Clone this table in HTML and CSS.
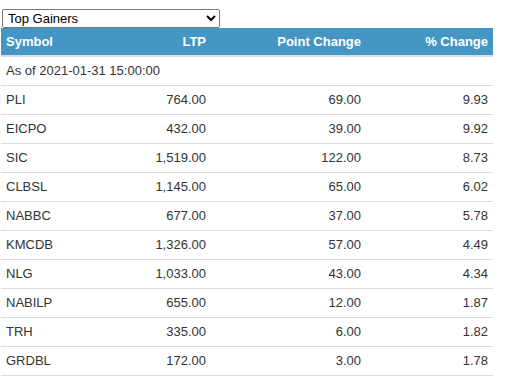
FILE: index.html
```html
<!DOCTYPE html>
<html>
<head>
<meta charset="utf-8">
<link rel="stylesheet" href="styles.css">
</head>
<body>
<div class="wrap">
  <select class="picker">
    <option>Top Gainers</option>
    <option>Top Losers</option>
  </select>
  <table class="market">
    <colgroup>
      <col class="c-sym"><col class="c-ltp"><col class="c-pt"><col class="c-pct">
    </colgroup>
    <thead>
      <tr><th class="left">Symbol</th><th>LTP</th><th>Point Change</th><th>% Change</th></tr>
    </thead>
    <tbody>
      <tr><td class="left" colspan="4">As of 2021-01-31 15:00:00</td></tr>
      <tr><td class="left">PLI</td><td>764.00</td><td>69.00</td><td>9.93</td></tr>
      <tr><td class="left">EICPO</td><td>432.00</td><td>39.00</td><td>9.92</td></tr>
      <tr><td class="left">SIC</td><td>1,519.00</td><td>122.00</td><td>8.73</td></tr>
      <tr><td class="left">CLBSL</td><td>1,145.00</td><td>65.00</td><td>6.02</td></tr>
      <tr><td class="left">NABBC</td><td>677.00</td><td>37.00</td><td>5.78</td></tr>
      <tr><td class="left">KMCDB</td><td>1,326.00</td><td>57.00</td><td>4.49</td></tr>
      <tr><td class="left">NLG</td><td>1,033.00</td><td>43.00</td><td>4.34</td></tr>
      <tr><td class="left">NABILP</td><td>655.00</td><td>12.00</td><td>1.87</td></tr>
      <tr><td class="left">TRH</td><td>335.00</td><td>6.00</td><td>1.82</td></tr>
      <tr><td class="left">GRDBL</td><td>172.00</td><td>3.00</td><td>1.78</td></tr>
    </tbody>
  </table>
</div>
</body>
</html>
```
FILE: styles.css
```css
html, body {
  margin: 0;
  padding: 0;
  background: #fff;
}
body {
  font-family: "Liberation Sans", Arial, sans-serif;
  font-size: 13px;
  color: #333;
}
.wrap {
  padding: 9px 0 0 1px;
  width: 492px;
}
.picker {
  display: block;
  margin: 0 0 0 1px;
  width: 218px;
  height: 19px;
  font-family: "Liberation Sans", Arial, sans-serif;
  font-size: 13px;
  color: #000;
  padding: 0 0 0 1px;
}
.market {
  width: 492px;
  border-collapse: collapse;
  table-layout: fixed;
  border-bottom: 1px solid #ddd;
}
.c-sym { width: 100px; }
.c-ltp { width: 110px; }
.c-pt { width: 155px; }
.c-pct { width: 127px; }
.market th {
  background: #4496c4;
  color: #fff;
  font-weight: bold;
  text-align: right;
  padding: 5px 5px 4px;
  line-height: 18px;
  border-bottom: 2px solid #ddd;
}
.market td {
  text-align: right;
  padding: 5px 5px;
  line-height: 18px;
  border-top: 1px solid #ddd;
  white-space: nowrap;
}
.market tbody tr:first-child td {
  border-top: 0;
}
.market .left {
  text-align: left;
}
```
